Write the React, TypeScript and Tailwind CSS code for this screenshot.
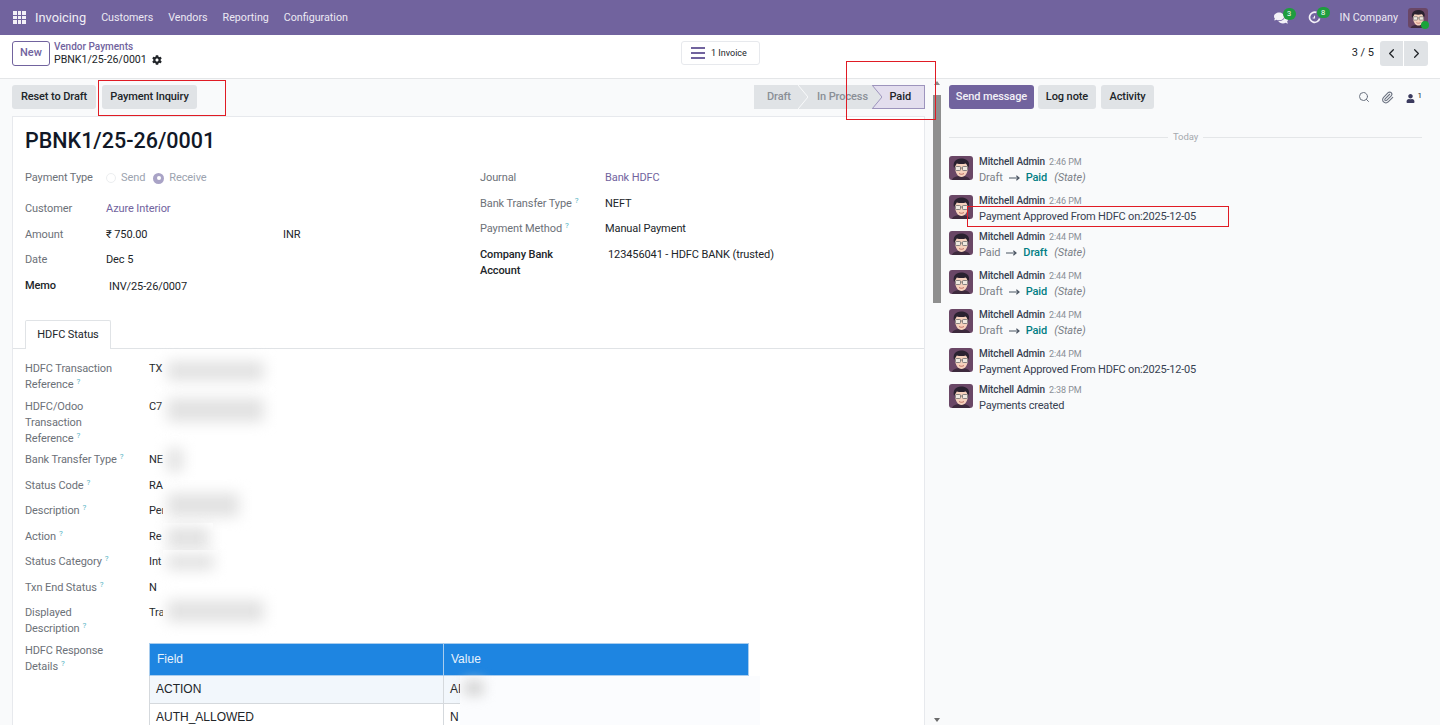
import React from "react";
import { ChevronLeft, ChevronRight, Paperclip, Search } from "lucide-react";
import { FaCog, FaComments, FaUser } from "react-icons/fa";

const Avatar = ({ className = "" }: { className?: string }) => (
  <svg viewBox="0 0 24 24" className={`rounded-[3px] ${className}`}>
    <rect width="24" height="24" fill="#6a4766" />
    <path d="M3 24c1-3 4-4 9-4s8 1 9 4z" fill="#3d2a3d" />
    <path d="M6 11c0 6 3 10 6.500 10S19 17 19 11s-2-6-6.500-6S6 6 6 11z" fill="#f6d2bd" />
    <path d="M5 12C3.500 6 7 2.500 12 2.500c4 0 7.500 1.500 8 5 .3 2-.5 3.500-1.200 4.500-.3-2-1-3.500-2-4.500-2.500.8-6.500.8-9 0C7 9 6 10.500 5 12z" fill="#2a2230" />
    <rect x="6.500" y="10.500" width="5" height="4" rx=".8" fill="#efe9e0" stroke="#6b6b6b" strokeWidth=".8" />
    <rect x="13.500" y="10.500" width="5" height="4" rx=".8" fill="#efe9e0" stroke="#6b6b6b" strokeWidth=".8" />
    <path d="M11.500 12h2" stroke="#6b6b6b" strokeWidth=".8" />
    <path d="M10 17.500c1.500 1 3.500 1 5 0" stroke="#b9655b" strokeWidth=".9" fill="none" />
  </svg>
);

const Hint = () => <sup className="ml-[3px] text-[8px] leading-none text-[#55b3c4]">?</sup>;

const Smudge = ({ className }: { className: string }) => (
  <div className={`absolute bg-white ${className}`}>
    <div className="absolute inset-x-1 top-1 bottom-1 bg-[#e2e2e2] blur-[7px]" />
  </div>
);

const Arrow = () => (
  <svg viewBox="0 0 12 8" className="mx-[6px] h-[8px] w-[11px]" fill="none" stroke="#4b5563" strokeWidth="1.200">
    <path d="M0 4h11M8 1.500L11 4 8 6.500" />
  </svg>
);

const FormRow = ({ label, labelW, hint, bold, h, children }: { label: string; labelW: string; hint?: boolean; bold?: boolean; h: string; children: React.ReactNode }) => (
  <div className={`flex ${h}`}>
    <div className={`${labelW} shrink-0 ${bold ? "font-medium text-[#212529]" : "text-[#6c7178]"}`}>
      {label}
      {hint && <Hint />}
    </div>
    <div className="flex-1 text-[#212529]">{children}</div>
  </div>
);

const StatusRow = ({ label, value, h }: { label: React.ReactNode; value: string; h: string }) => (
  <div className={`flex ${h}`}>
    <div className="w-[124px] shrink-0 pr-4 text-[#6c7178]">
      {label}
      <Hint />
    </div>
    <div className="text-[#212529]">{value}</div>
  </div>
);

const MessageHead = ({ time }: { time: string }) => (
  <div className="flex h-[12px] items-center gap-1">
    <span className="text-[10px] font-medium text-[#374151]">Mitchell Admin</span>
    <span className="text-[9px] text-[#8a8f96]">{time}</span>
  </div>
);

const Tracking = ({ time, from, to }: { time: string; from: string; to: string }) => (
  <div className="flex h-[39px] gap-[6px]">
    <Avatar className="h-6 w-6 shrink-0" />
    <div>
      <MessageHead time={time} />
      <div className="mt-[1px] flex h-[17px] items-center text-[#7b8087]">
        <span>{from}</span>
        <Arrow />
        <span className="font-medium text-[#017e84]">{to}</span>
        <span className="ml-[7px] italic">(State)</span>
      </div>
    </div>
  </div>
);

const Comment = ({ time, text }: { time: string; text: string }) => (
  <div className="flex h-[36px] gap-[6px]">
    <Avatar className="h-6 w-6 shrink-0" />
    <div>
      <MessageHead time={time} />
      <div className="mt-[1px] flex h-[17px] items-center tracking-[-0.2px] text-[#374151]">{text}</div>
    </div>
  </div>
);

const App = () => {
  return (
    <div className="relative flex h-[725px] flex-col overflow-hidden bg-white font-['Roboto',sans-serif] text-[11px] leading-4 tracking-[-0.1px] text-[#212529]">
      <header className="flex h-[35px] shrink-0 items-center bg-[#71639e] pl-[13px] pr-[12px] tracking-normal text-white">
        <div className="grid h-[13px] w-[13px] grid-cols-3 gap-[1px]">
          {Array.from({ length: 9 }).map((_, i) => (
            <span key={i} className="bg-[#f3f1f7]" />
          ))}
        </div>
        <span className="ml-[9px] text-[12.800px] text-[#f0eef5]">Invoicing</span>
        <nav className="ml-[15px] flex gap-[15px] text-[10.700px] text-[#ece9f3]">
          <span>Customers</span>
          <span>Vendors</span>
          <span>Reporting</span>
          <span>Configuration</span>
        </nav>
        <div className="ml-auto flex items-center">
          <div className="relative mr-[20px]">
            <FaComments className="h-[14px] w-[14px] text-[#f3f1f7]" />
            <span className="absolute -top-[3px] left-[9px] flex h-[12px] w-[13px] items-center justify-center rounded-full bg-[#1f9d3f] text-[7.500px] text-white">3</span>
          </div>
          <div className="relative mr-[19px]">
            <svg viewBox="0 0 14 14" className="h-[13px] w-[13px]" fill="none" stroke="#f3f1f7" strokeWidth="1.800">
              <path d="M9 1.500A5.500 5.500 0 1 0 12.500 8" />
              <path d="M7 5v2.500h-2" strokeWidth="1.200" />
            </svg>
            <span className="absolute -top-[4px] left-[9px] flex h-[11px] w-[13px] items-center justify-center rounded-full bg-[#1f9d3f] text-[7.500px] text-white">8</span>
          </div>
          <span className="mr-[10px] text-[10.700px] text-[#ece9f3]">IN Company</span>
          <div className="relative h-[20px] w-[20px]">
            <Avatar className="h-[20px] w-[20px]" />
            <span className="absolute -bottom-[1px] -right-[1px] h-2 w-2 rounded-full bg-[#1aa33a]" />
          </div>
        </div>
      </header>

      <div className="flex h-[44px] shrink-0 items-center border-b border-[#e4e6e8] pb-[7px] pl-[12px] pr-[12px] tracking-normal">
        <button className="h-[25px] w-[38px] rounded-[3px] border border-[#71639e] text-[11px] font-medium text-[#71639e]">New</button>
        <div className="ml-[4px] w-[627px] leading-[13px]">
          <div className="text-[10px] font-medium text-[#71639e]">Vendor Payments</div>
          <div className="flex items-center gap-[5px] text-[10.600px]">
            PBNK1/25-26/0001
            <FaCog className="h-[10px] w-[10px] text-[#212529]" />
          </div>
        </div>
        <button className="flex h-[24px] w-[79px] items-center gap-[6px] rounded-[3px] border border-[#e7e9ed] pl-[9px] text-[9px]">
          <span className="flex w-[14px] flex-col gap-[3px]">
            <span className="h-[2px] bg-[#71639e]" />
            <span className="h-[2px] bg-[#71639e]" />
            <span className="h-[2px] bg-[#71639e]" />
          </span>
          1 Invoice
        </button>
        <span className="ml-auto mr-[6px] text-[11px]">3 / 5</span>
        <div className="flex h-[25px] overflow-hidden rounded-[3px] bg-[#e0e3e6]">
          <span className="flex w-[24px] items-center justify-center border-r border-white">
            <ChevronLeft className="h-[15px] w-[15px]" />
          </span>
          <span className="flex w-[24px] items-center justify-center">
            <ChevronRight className="h-[15px] w-[15px]" />
          </span>
        </div>
      </div>

      <div className="flex min-h-0 flex-1 bg-[#f9fafb]">
        <div className="w-[933px] shrink-0 overflow-hidden pl-[12px] pr-[8px]">
          <div className="flex h-[37px] items-center pb-[1px]">
            <button className="h-[24px] w-[84px] rounded-[3px] bg-[#e0e3e6] font-medium">Reset to Draft</button>
            <button className="ml-[6px] h-[24px] w-[95px] rounded-[3px] bg-[#e0e3e6] font-medium">Payment Inquiry</button>
            <div className="ml-auto flex h-[24px] font-medium">
              <div className="relative flex w-[49px] items-center bg-[#e0e3e6] pl-[13px] text-[#8a8f96]">
                Draft
                <svg viewBox="0 0 10 24" className="absolute -right-[5px] top-0 h-[24px] w-[10px]" preserveAspectRatio="none">
                  <path d="M0 0L10 12L0 24" fill="none" stroke="#f9fafb" strokeWidth="1" />
                </svg>
              </div>
              <div className="flex w-[70px] items-center bg-[#e0e3e6] pl-[14px] text-[#8a8f96]">In Process</div>
              <div className="relative flex w-[52px] items-center justify-end border-y border-r border-[#9d94bd] bg-[#e3deee] pr-[13px] text-[#212529]">
                <svg viewBox="0 0 10 24" className="absolute -left-px -top-px h-[24px] w-[10px]" preserveAspectRatio="none">
                  <path d="M0 0L10 12L0 24" fill="#e0e3e6" stroke="#9d94bd" strokeWidth="1" />
                </svg>
                Paid
              </div>
            </div>
          </div>

          <div className="h-[620px] border border-[#e7e9ed] bg-white">
            <div className="px-3 pt-[11px]">
              <h1 className="h-[25px] text-[21.500px] font-medium leading-[25px] tracking-normal text-[#111827]">PBNK1/25-26/0001</h1>
              <div className="mt-[17px] flex">
                <div className="w-[455px] shrink-0">
                  <FormRow label="Payment Type" labelW="w-[81px]" h="h-[31px]">
                    <div className="flex items-center text-[#9ca3af]">
                      <span className="h-[10px] w-[10px] rounded-full border border-[#eceef0]" />
                      <span className="ml-[5px]">Send</span>
                      <span className="ml-[8px] flex h-[11px] w-[11px] items-center justify-center rounded-full bg-[#a9a3c6]">
                        <span className="h-[4px] w-[4px] rounded-full bg-white" />
                      </span>
                      <span className="ml-[5px]">Receive</span>
                    </div>
                  </FormRow>
                  <FormRow label="Customer" labelW="w-[81px]" h="h-[25.500px]">
                    <span className="text-[#71639e]">Azure Interior</span>
                  </FormRow>
                  <FormRow label="Amount" labelW="w-[81px]" h="h-[25.500px]">
                    <div className="flex">
                      <span className="w-[177px]">₹ 750.00</span>
                      <span>INR</span>
                    </div>
                  </FormRow>
                  <FormRow label="Date" labelW="w-[81px]" h="h-[25.500px]">Dec 5</FormRow>
                  <FormRow label="Memo" labelW="w-[81px]" bold h="h-[25.500px]">
                    <span className="ml-[3px] inline-block pt-[1px]">INV/25-26/0007</span>
                  </FormRow>
                </div>
                <div className="flex-1">
                  <FormRow label="Journal" labelW="w-[125px]" h="h-[25.500px]">
                    <span className="text-[#71639e]">Bank HDFC</span>
                  </FormRow>
                  <FormRow label="Bank Transfer Type" labelW="w-[125px]" hint h="h-[25.500px]">NEFT</FormRow>
                  <FormRow label="Payment Method" labelW="w-[125px]" hint h="h-[25.500px]">Manual Payment</FormRow>
                  <FormRow label="Company Bank Account" labelW="w-[100px] mr-[25px]" bold h="h-[32px]">
                    <span className="ml-[3px] inline-block">123456041 - HDFC BANK (trusted)</span>
                  </FormRow>
                </div>
              </div>
              <div className="-mx-3 mt-[17px] flex h-[29px] border-b border-[#e0e3e6] pl-3">
                <div className="flex h-[29px] w-[86px] items-center justify-center rounded-t-[2px] border border-b-0 border-[#e0e3e6] bg-white">HDFC Status</div>
              </div>
              <div className="mt-[12px]">
                <div className="relative">
                  <StatusRow h="h-[38px]" label="HDFC Transaction Reference" value="TX" />
                  <Smudge className="left-[138px] top-[-4px] h-[28px] w-[105px]" />
                </div>
                <div className="relative">
                  <StatusRow h="h-[53px]" label="HDFC/Odoo Transaction Reference" value="C7" />
                  <Smudge className="left-[138px] top-[-5px] h-[32px] w-[105px]" />
                </div>
                <div className="relative">
                  <StatusRow h="h-[25.500px]" label="Bank Transfer Type" value="NE" />
                  <Smudge className="left-[138px] top-[-8px] h-[32px] w-[24px]" />
                </div>
                <StatusRow h="h-[25.500px]" label="Status Code" value="RA" />
                <div className="relative">
                  <StatusRow h="h-[25.500px]" label="Description" value="Per" />
                  <Smudge className="left-[138px] top-[-14px] h-[32px] w-[80px]" />
                </div>
                <div className="relative">
                  <StatusRow h="h-[25.500px]" label="Action" value="Re" />
                  <Smudge className="left-[138px] top-[-6px] h-[30px] w-[50px]" />
                </div>
                <div className="relative">
                  <StatusRow h="h-[25.500px]" label="Status Category" value="Int" />
                  <Smudge className="left-[138px] top-[-4px] h-[24px] w-[55px]" />
                </div>
                <StatusRow h="h-[25px]" label="Txn End Status" value="N" />
                <div className="relative">
                  <StatusRow h="h-[38px]" label="Displayed Description" value="Tra" />
                  <Smudge className="left-[138px] top-[-9px] h-[30px] w-[105px]" />
                </div>
                <div className="flex">
                  <div className="w-[124px] shrink-0 pr-4 text-[#6c7178]">
                    HDFC Response Details
                    <Hint />
                  </div>
                  <table className="h-fit w-[600px] table-fixed border-collapse font-['Liberation_Sans',sans-serif] text-[12px] tracking-normal">
                    <thead>
                      <tr className="h-[32px] bg-[#1e85e1] text-left font-normal text-[#e8f2fc]">
                        <th className="w-[294px] border border-[#a9cdee] pl-[7px] font-normal">Field</th>
                        <th className="border border-[#a9cdee] pl-[7px] font-normal">Value</th>
                      </tr>
                    </thead>
                    <tbody>
                      <tr className="h-[28px] bg-[#f2f7fc]">
                        <td className="border border-[#d5d9dd] pl-[6px]">ACTION</td>
                        <td className="relative border border-[#d5d9dd] pl-[6px]">
                          AP
                          <div className="absolute -bottom-[28px] left-[16px] top-0 w-[300px] bg-[#fbfcfe]">
                            <div className="absolute left-1 top-1 h-4 w-5 bg-[#d8d8d8] blur-[6px]" />
                          </div>
                        </td>
                      </tr>
                      <tr className="h-[28px]">
                        <td className="border border-[#d5d9dd] pl-[6px]">AUTH_ALLOWED</td>
                        <td className="border border-[#d5d9dd] pl-[6px]">N</td>
                      </tr>
                    </tbody>
                  </table>
                </div>
              </div>
            </div>
          </div>
        </div>

        <div className="relative w-[8px] shrink-0 bg-[#f9fafb]">
          <div className="absolute left-0 right-0 top-[16px] h-[208px] bg-[#8f8f8f]" />
          <span className="absolute left-[1px] top-[2px] border-x-[3px] border-b-[4px] border-x-transparent border-b-[#8a8a8a]" />
          <span className="absolute bottom-[3px] left-[1px] border-x-[3px] border-t-[4px] border-x-transparent border-t-[#6b6b6b]" />
        </div>

        <div className="min-w-0 flex-1 pl-[8px] pr-[18px]">
          <div className="flex h-[37px] items-center pb-[1px] font-medium">
            <button className="h-[24px] w-[85px] rounded-[3px] bg-[#71639e] text-[#f3f1f7]">Send message</button>
            <button className="ml-[4px] h-[24px] w-[58px] rounded-[3px] bg-[#e0e3e6]">Log note</button>
            <button className="ml-[5px] h-[24px] w-[53px] rounded-[3px] bg-[#e0e3e6]">Activity</button>
            <div className="ml-auto flex items-center gap-[11px] text-[#6b7280]">
              <Search className="h-[12px] w-[12px]" />
              <Paperclip className="h-[13px] w-[13px]" />
              <span className="ml-[1px] flex items-start">
                <FaUser className="mt-[2px] h-[9px] w-[9px] text-[#3b3a5e]" />
                <span className="ml-[3px] text-[8px] font-normal leading-[8px] text-[#212529]">1</span>
              </span>
            </div>
          </div>
          <div className="mt-[13px] flex h-[16px] items-center text-[9.500px] text-[#a5a9ae]">
            <span className="h-px flex-1 bg-[#e4e6e8]" />
            <span className="px-[5px]">Today</span>
            <span className="h-px flex-1 bg-[#e4e6e8]" />
          </div>
          <div className="mt-[11px]">
            <Tracking time="2:46 PM" from="Draft" to="Paid" />
            <Comment time="2:46 PM" text="Payment Approved From HDFC on:2025-12-05" />
            <Tracking time="2:44 PM" from="Paid" to="Draft" />
            <Tracking time="2:44 PM" from="Draft" to="Paid" />
            <Tracking time="2:44 PM" from="Draft" to="Paid" />
            <Comment time="2:44 PM" text="Payment Approved From HDFC on:2025-12-05" />
            <Comment time="2:38 PM" text="Payments created" />
          </div>
        </div>
      </div>

      <div className="absolute left-[98px] top-[80px] h-[36px] w-[128px] border-[1.500px] border-[#e01b24]" />
      <div className="absolute left-[846px] top-[61px] h-[59px] w-[90px] border-[1.500px] border-[#e01b24]" />
      <div className="absolute left-[967px] top-[206px] h-[21px] w-[262px] border-[1.500px] border-[#e01b24]" />
    </div>
  );
};

export default App;
